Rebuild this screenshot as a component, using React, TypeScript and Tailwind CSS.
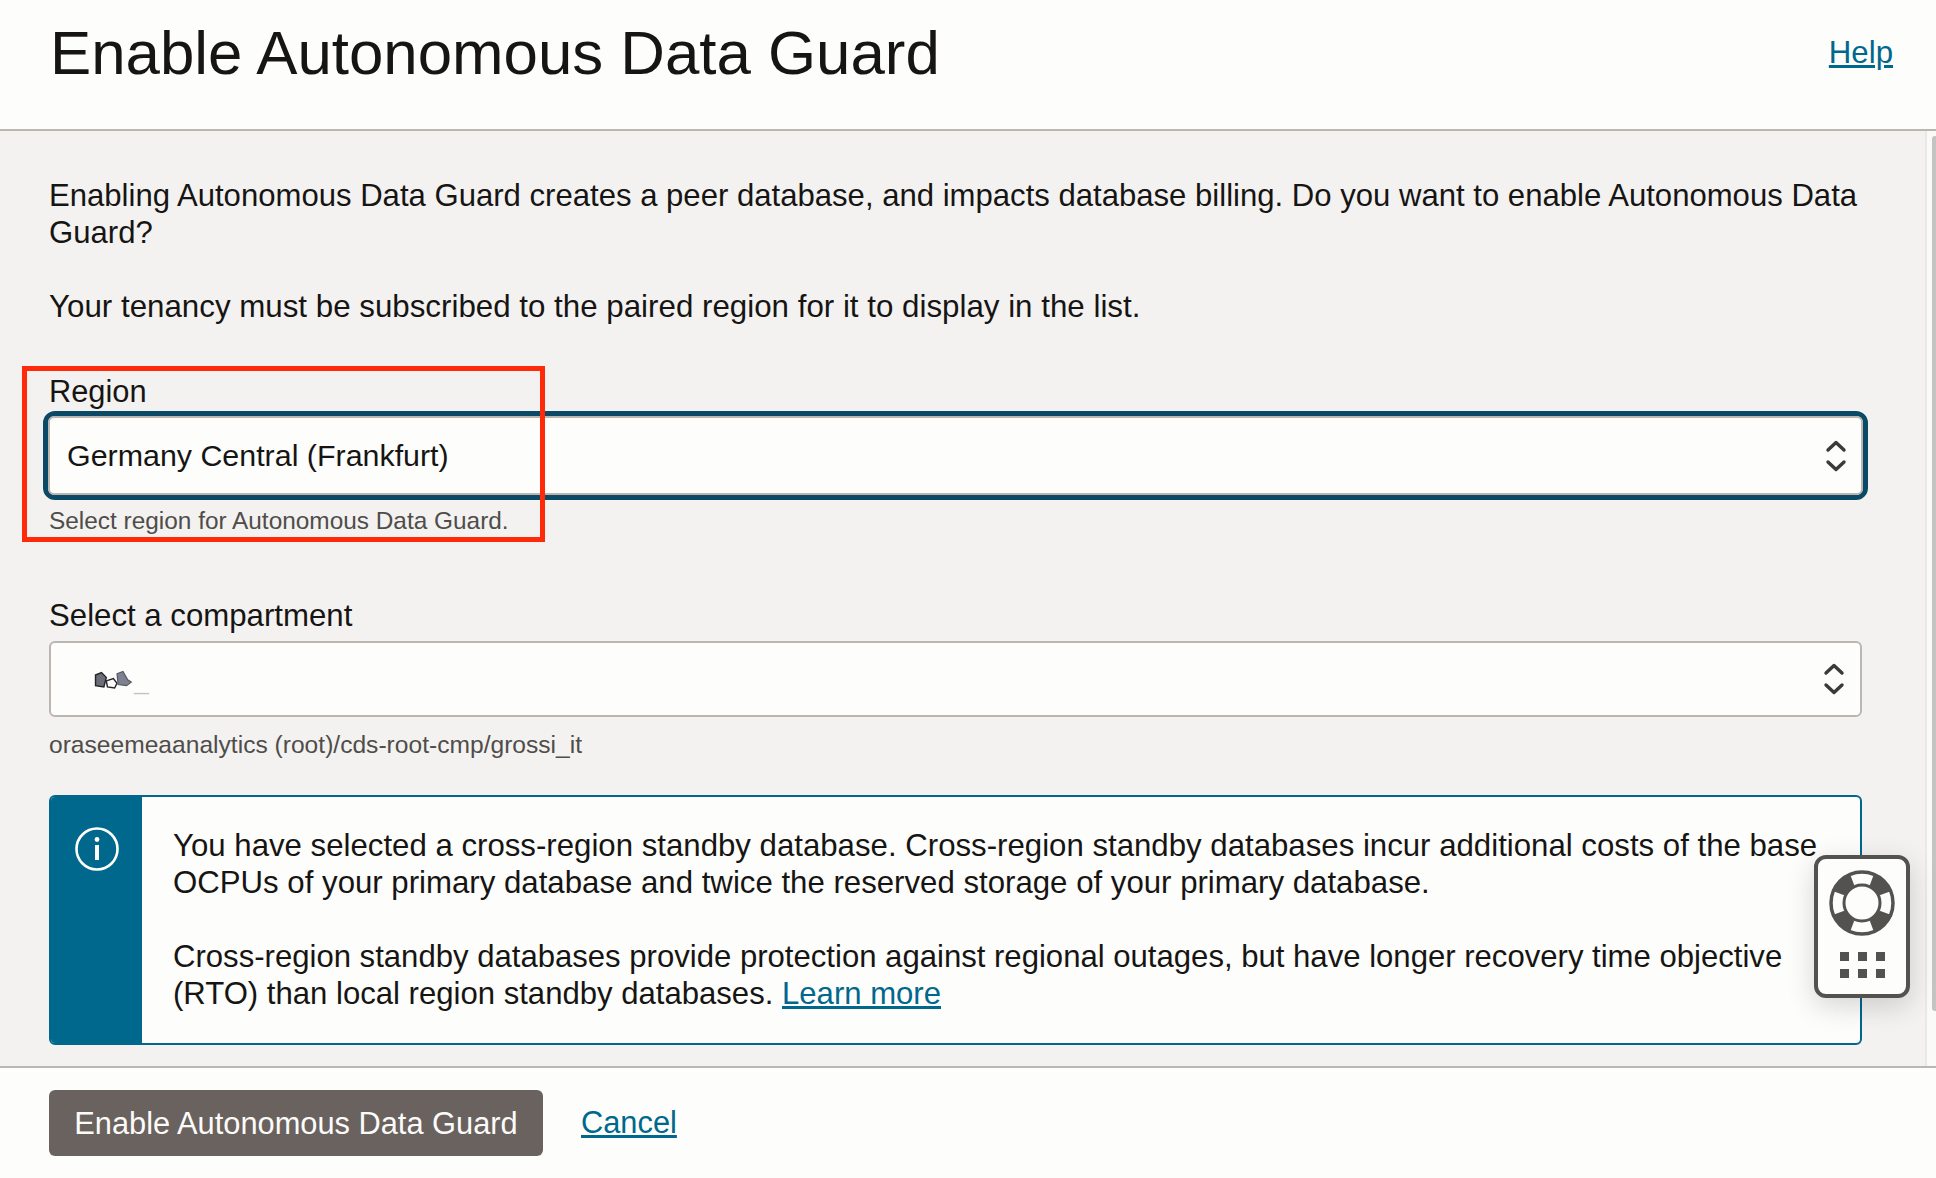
import React from 'react';

const font = { fontFamily: '"Liberation Sans", Arial, sans-serif' };

const Chevrons = () => (
    <svg width="22" height="34" viewBox="0 0 22 34" fill="none" stroke="#3c3a37" strokeWidth="3.4" strokeLinecap="round" strokeLinejoin="round">
        <path d="M3 11 L11 3.5 L19 11" />
        <path d="M3 23 L11 30.5 L19 23" />
    </svg>
);

const LifeBuoy = () => (
    <svg width="68" height="68" viewBox="-34 -34 68 68">
        <circle r="31" fill="none" stroke="#54524f" strokeWidth="3.5" />
        <circle r="18" fill="none" stroke="#54524f" strokeWidth="3" />
        {[45, 135, 225, 315].map(a => (
            <polygon key={a} points="-7,-18 7,-18 12.5,-30 -12.5,-30" fill="#54524f" transform={`rotate(${a})`} />
        ))}
    </svg>
);

// the redacted compartment name is only a small smudge in the picture
const Smudge = () => (
    <svg width="96" height="31" viewBox="0 0 80 26" className="ml-[18px] mt-[10px]">
        <path d="M22 5 L27 3 L31 7 L29 15 L22 14 Z" fill="#6b6e78" stroke="#24252b" strokeWidth="1.2" />
        <path d="M31 10 L37 8 L40 12 L38 16 L32 15 Z" fill="#fcfbfa" stroke="#24252b" strokeWidth="1.2" />
        <path d="M40 4 L45 2 L49 9 L52 11 L48 14 L41 13 Z" fill="#7d8190" stroke="#555864" strokeWidth="1" />
        <rect x="54" y="20" width="13" height="1.2" fill="#c4c4c4" />
    </svg>
);

const App: React.FC = () => {
    return (
        <div style={font} className="relative flex flex-col h-[1178px] w-[1936px] overflow-hidden bg-[#fdfdfc] text-[31.2px] leading-[37px] text-[#161513]">
            <header className="flex items-center justify-between h-[131px] pl-[50px] pr-[43px] pb-[24px] border-b-2 border-[#bcb6b1] shrink-0">
                <h1 className="text-[61.8px] leading-[70px] font-normal">Enable Autonomous Data Guard</h1>
                <a href="#" className="text-[#00688c] underline">Help</a>
            </header>

            <main className="relative flex-1 min-h-0 bg-[#f3f2f1] pl-[49px] pr-[74px] pt-[46px] overflow-hidden">
                <p className="text-[31.1px]">Enabling Autonomous Data Guard creates a peer database, and impacts database billing. Do you want to enable Autonomous Data Guard?</p>
                <p className="mt-[37px] text-[31.3px]">Your tenancy must be subscribed to the paired region for it to display in the list.</p>

                <label className="block mt-[49px] leading-[36px] text-[30.8px]">Region</label>
                <div className="mt-[1px] rounded-[12px] border-[5px] border-[#0a4a66] -mx-[6px]">
                    <div className="flex items-center justify-between h-[79px] rounded-[6px] border-2 border-[#bcb6b1] bg-[#fdfdfc] pl-[17px] pr-[14px]">
                        <span className="text-[30.4px]">Germany Central (Frankfurt)</span>
                        <Chevrons />
                    </div>
                </div>
                <p className="mt-[2px] text-[24.4px] leading-[37px] text-[#4f4d4a]">Select region for Autonomous Data Guard.</p>

                <label className="block mt-[59px] leading-[36px]">Select a compartment</label>
                <div className="flex items-center justify-between mt-[7px] h-[76px] rounded-[6px] border-2 border-[#bcb6b1] bg-[#fdfdfc] pr-[15px]">
                    <Smudge />
                    <Chevrons />
                </div>
                <p className="mt-[9px] text-[24.6px] leading-[37px] text-[#4f4d4a]">oraseemeaanalytics (root)/cds-root-cmp/grossi_it</p>

                <div className="flex mt-[32px] h-[250px] rounded-[6px] border-2 border-[#00688c] bg-[#fdfdfc] overflow-hidden">
                    <div className="w-[91px] shrink-0 bg-[#00688c] flex justify-center pt-[30px]">
                        <svg width="44" height="44" viewBox="0 0 44 44" fill="none" stroke="#fff">
                            <circle cx="22" cy="22" r="20.5" strokeWidth="2.6" />
                            <circle cx="22" cy="12.5" r="2.4" fill="#fff" stroke="none" />
                            <rect x="20" y="18" width="4" height="15" fill="#fff" stroke="none" />
                        </svg>
                    </div>
                    <div className="pl-[31px] pr-[30px] pt-[30px]">
                        <p>You have selected a cross-region standby database. Cross-region standby databases incur additional costs of the base OCPUs of your primary database and twice the reserved storage of your primary database.</p>
                        <p className="mt-[37px] pr-[24px] text-[31.1px]">Cross-region standby databases provide protection against regional outages, but have longer recovery time objective (RTO) than local region standby databases. <a href="#" className="text-[#00688c] underline">Learn more</a></p>
                    </div>
                </div>

                <div className="absolute right-0 top-0 bottom-0 w-[11px] bg-[#fafaf9] border-l-2 border-[#e9e8e7]">
                    <div className="ml-[5px] w-[4px] mt-[5px] h-[875px] bg-[#c4c4c4] rounded-l-[3px]" />
                </div>
            </main>

            <footer className="flex items-start h-[112px] pl-[49px] pt-[22px] shrink-0 border-t-2 border-[#bcb6b1] gap-[38px]">
                <button className="h-[66px] w-[494px] rounded-[6px] bg-[#6a625e] text-[#fcfbfa] text-[30.8px]">Enable Autonomous Data Guard</button>
                <a href="#" className="text-[#00688c] underline text-[30.8px] leading-[66px]">Cancel</a>
            </footer>

            {/* annotation drawn over the form */}
            <div className="absolute left-[22px] top-[366px] w-[523px] h-[176px] border-[5px] border-[#ff2a0a]" />

            {/* floating help widget */}
            <div className="absolute left-[1814px] top-[855px] w-[96px] h-[143px] flex flex-col items-center rounded-[12px] border-[4px] border-[#54524f] bg-[#fdfdfc] shadow-[0_8px_28px_rgba(0,0,0,0.16)] pt-[10px]">
                <LifeBuoy />
                <div className="grid grid-cols-3 gap-x-[9px] gap-y-[8px] mt-[15px]">
                    {[0, 1, 2, 3, 4, 5].map(i => <span key={i} className="w-[9px] h-[9px] bg-[#54524f]" />)}
                </div>
            </div>
        </div>
    );
};

export default App;
